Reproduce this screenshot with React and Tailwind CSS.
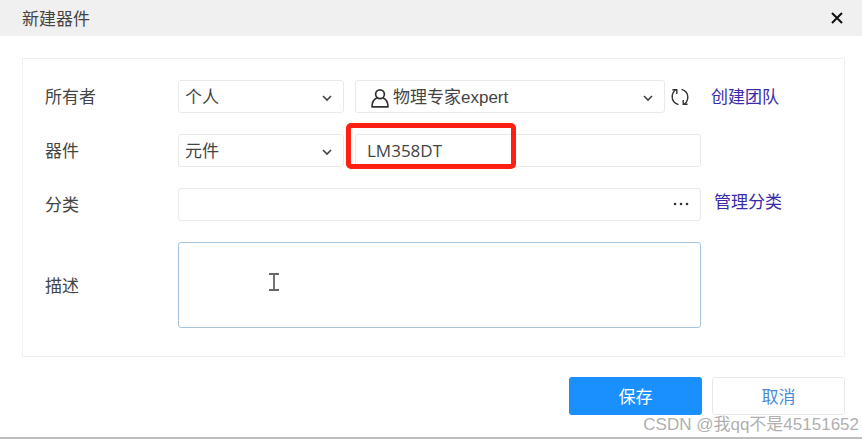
import React, { useState } from "react";

const owners = ["个人"];
const users = ["物理专家expert"];
const kinds = ["元件"];

const fieldClass =
  "h-[33px] w-full rounded-[3px] border border-[#e9e9e9] bg-white text-[#444] outline-none";

const Chevron = () => (
  <svg
    className="pointer-events-none absolute right-3 top-[14px] h-2 w-2.5"
    viewBox="0 0 10 8"
    fill="none"
    stroke="#444"
    strokeWidth="1.6"
  >
    <path d="M1 2l4 4 4-4" />
  </svg>
);

const UserIcon = () => (
  <svg
    className="pointer-events-none absolute left-4 top-2 h-5 w-[18px]"
    viewBox="0 0 18 20"
    fill="none"
    stroke="#333"
    strokeWidth="1.7"
    strokeLinejoin="round"
  >
    <circle cx="9" cy="6.2" r="4.4" />
    <path d="M6.200 9.800C3 11.200 1 14 1 18.800h16c0-4.800-2-7.600-5.200-9" />
  </svg>
);

const RefreshIcon = () => (
  <svg
    className="h-[18px] w-[18px]"
    viewBox="0 0 18 18"
    fill="none"
    stroke="#333"
    strokeWidth="1.4"
  >
    <path d="M7.500 16.600C3.600 15.400 1.200 12.600 1.200 9c0-3 1.300-5.500 3.400-7.200" />
    <path d="M1.400 1.700h4.400v4.200" />
    <path d="M10.500 1.400c3.900 1.200 6.300 4 6.300 7.600 0 3-1.300 5.500-3.400 7.200" />
    <path d="M16.600 16.300h-4.400v-4.200" />
  </svg>
);

const TextCursor = () => (
  <svg
    className="pointer-events-none absolute left-[90px] top-[30px] h-5 w-3"
    viewBox="0 0 12 20"
    fill="none"
    stroke="#666"
    strokeWidth="1.8"
  >
    <path d="M1 2h10M6 2v16M1 18h10" />
  </svg>
);

const Row = ({ id, label, aside, asideClass = "pl-[13px]", children }) => (
  <div className="flex items-center">
    <label htmlFor={id} className="w-[133px] shrink-0 pt-[3px]">
      {label}
    </label>
    <div className="flex min-w-0 flex-1 items-center">{children}</div>
    <div className={`w-[143px] shrink-0 ${asideClass}`}>
      {aside && (
        <a href="#" className="text-[#3a2ca8]">
          {aside}
        </a>
      )}
    </div>
  </div>
);

const Select = ({ id, label, options, icon, className = "pl-[6px]" }) => (
  <div className="relative w-full">
    {icon}
    <select
      id={id}
      aria-label={label}
      className={`${fieldClass} appearance-none pr-8 pt-[3px] ${className}`}
    >
      {options.map((option) => (
        <option key={option}>{option}</option>
      ))}
    </select>
    <Chevron />
  </div>
);

const App = () => {
  const [name, setName] = useState("LM358DT");
  const [category, setCategory] = useState("");
  const [description, setDescription] = useState("");

  return (
    <div className="relative border-b-2 border-[#bdbdbd] bg-white font-['Liberation_Sans','Noto_Sans_CJK_SC',sans-serif] text-[17px] leading-6 text-[#444]">
      <header className="flex h-9 items-center justify-between bg-[#f0f0f0] pl-[22px] pr-[18px]">
        <h1 className="pt-[3px]">新建器件</h1>
        <button type="button" aria-label="关闭">
          <svg
            className="h-3.5 w-3.5"
            viewBox="0 0 14 14"
            stroke="#111"
            strokeWidth="2"
          >
            <path d="M2 2l10 10M12 2L2 12" />
          </svg>
        </button>
      </header>

      <form className="pb-[22px] pl-[22px] pr-[17px] pt-[22px]">
        <div className="flex flex-col gap-[21px] border border-[#f0f0f0] pb-7 pl-[22px] pt-[21px]">
          <Row
            id="owner"
            label="所有者"
            aside="创建团队"
            asideClass="pl-[10px] pt-[3px]"
          >
            <div className="mr-[11px] w-[166px] shrink-0">
              <Select id="owner" options={owners} />
            </div>
            <Select
              id="user"
              label="用户"
              options={users}
              icon={<UserIcon />}
              className="pl-[37px]"
            />
            <button type="button" aria-label="刷新" className="ml-[6px] mr-3">
              <RefreshIcon />
            </button>
          </Row>

          <Row id="kind" label="器件">
            <div className="mr-[11px] w-[166px] shrink-0">
              <Select id="kind" options={kinds} />
            </div>
            <div className="relative w-full">
              <input
                type="text"
                aria-label="器件名称"
                value={name}
                onChange={(e) => setName(e.target.value)}
                className={`${fieldClass} px-[11px] font-['Open_Sans',sans-serif]`}
              />
              <div className="pointer-events-none absolute -left-[9px] -top-[11px] h-[46px] w-[170px] rounded-[5px] border-5 border-[#ff2013]" />
            </div>
          </Row>

          <Row
            id="category"
            label="分类"
            aside="管理分类"
            asideClass="pb-[3px] pl-[13px]"
          >
            <div className="relative w-full">
              <input
                id="category"
                type="text"
                value={category}
                onChange={(e) => setCategory(e.target.value)}
                className={`${fieldClass} pl-3 pr-10`}
              />
              <button
                type="button"
                aria-label="选择分类"
                className="absolute right-3 top-3"
              >
                <svg className="h-2 w-4" viewBox="0 0 16 8" fill="#333">
                  <circle cx="2" cy="4" r="1.3" />
                  <circle cx="8" cy="4" r="1.3" />
                  <circle cx="14" cy="4" r="1.3" />
                </svg>
              </button>
            </div>
          </Row>

          <Row id="description" label="描述">
            <div className="relative w-full">
              <textarea
                id="description"
                value={description}
                onChange={(e) => setDescription(e.target.value)}
                className="block h-[86px] w-full resize-none rounded-[3px] border border-[#a3c6de] px-3 py-1 outline-none"
              />
              <TextCursor />
            </div>
          </Row>
        </div>

        <div className="flex justify-end gap-[10px] pt-5">
          <button
            type="submit"
            className="h-[38px] w-[133px] rounded-[3px] bg-[#1a90ff] pt-[3px] text-white"
          >
            保存
          </button>
          <button
            type="button"
            className="h-[38px] w-[133px] rounded-[3px] border border-[#e9e9e9] bg-white pt-[3px] text-[#4a8bd8]"
          >
            取消
          </button>
        </div>
      </form>

      <div className="pointer-events-none absolute bottom-0 right-[3px] text-[#b0b0b0]">
        CSDN @我qq不是45151652
      </div>
    </div>
  );
};

export default App;
